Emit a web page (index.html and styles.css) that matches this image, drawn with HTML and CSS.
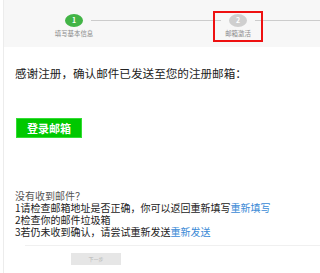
FILE: index.html
```html
<!DOCTYPE html>
<html lang="zh-CN">
<head>
<meta charset="utf-8">
<title>邮箱激活</title>
<link rel="stylesheet" href="styles.css">
</head>
<body>
<div class="page">
  <div class="steps">
    <div class="step">
      <div class="dot dot-done">1</div>
      <div class="step-label">填写基本信息</div>
    </div>
    <div class="connector"></div>
    <div class="step">
      <div class="dot dot-todo">2</div>
      <div class="step-label">邮箱激活</div>
      <div class="mark"></div>
    </div>
    <div class="connector connector-tail"></div>
  </div>
  <div class="content">
    <p class="thanks">感谢注册，确认邮件已发送至您的注册邮箱：</p>
    <button class="login-btn" type="button">登录邮箱</button>
    <div class="help">
      <div class="help-title">没有收到邮件？</div>
      <div class="help-line">1请检查邮箱地址是否正确，你可以返回重新填写<a class="link" href="#">重新填写</a></div>
      <div class="help-line">2检查你的邮件垃圾箱</div>
      <div class="help-line">3若仍未收到确认，请尝试重新发送<a class="link" href="#">重新发送</a></div>
    </div>
  </div>
  <div class="footer">
    <button class="next-btn" type="button">下一步</button>
  </div>
</div>
</body>
</html>
```
FILE: styles.css
```css
html, body {
  margin: 0;
  padding: 0;
  background: #ffffff;
}
body {
  font-family: "Noto Sans CJK SC", "Noto Sans", sans-serif;
  color: #333333;
}
.page {
  margin-left: 3px;
  border-left: 1px solid #ececec;
  min-height: 273px;
  box-sizing: border-box;
  overflow: hidden;
}
.steps {
  height: 47px;
  background: #f7f7f7;
  display: flex;
  align-items: flex-start;
  padding-left: 61px;
  padding-top: 14px;
  box-sizing: border-box;
}
.step {
  position: relative;
  width: 18px;
  display: flex;
  flex-direction: column;
  align-items: center;
  flex: none;
}
.dot {
  width: 18px;
  height: 13px;
  border-radius: 50%;
  color: #ffffff;
  font-size: 7px;
  line-height: 13px;
  text-align: center;
  font-weight: bold;
}
.dot-done { background: #42b446; }
.dot-todo { background: #cfcfcf; }
.step-label {
  margin-top: 3px;
  font-size: 6.4px;
  line-height: 8px;
  white-space: nowrap;
  color: #8a8a8a;
}
.connector {
  flex: none;
  width: 130px;
  height: 1px;
  background: #cccccc;
  margin: 6px 8px 0;
}
.connector-tail {
  width: 80px;
  margin-right: 0;
}
.mark {
  position: absolute;
  left: -16px;
  top: -3px;
  width: 46px;
  height: 27px;
  border: 2px solid #ee1111;
}
.content {
  padding: 18px 0 0 11px;
}
.thanks {
  margin: 0;
  font-size: 11.6px;
  line-height: 16px;
  color: #222222;
}
.login-btn {
  display: block;
  margin: 37px 0 0 1px;
  width: 66px;
  height: 20px;
  padding: 0;
  border: 1px solid #33dd33;
  background: #00c800;
  color: #ffffff;
  font-family: "Noto Sans CJK SC", sans-serif;
  font-weight: bold;
  font-size: 11px;
  line-height: 18px;
  text-align: center;
}
.help {
  margin-top: 52px;
  font-size: 10px;
  line-height: 12px;
}
.help-title {
  color: #555555;
}
.help-line {
  color: #222222;
  white-space: nowrap;
}
.link {
  color: #3a8ad6;
  text-decoration: none;
}
.footer {
  margin: 7px 0 0 21px;
  border-top: 1px solid #f0f0f0;
  padding: 7px 0 0 46px;
}
.next-btn {
  display: block;
  width: 50px;
  height: 12px;
  padding: 0;
  border: none;
  background: #e6e6e6;
  color: #b5b5b5;
  font-family: "Noto Sans CJK SC", sans-serif;
  font-size: 5px;
  line-height: 12px;
  text-align: center;
}
```
